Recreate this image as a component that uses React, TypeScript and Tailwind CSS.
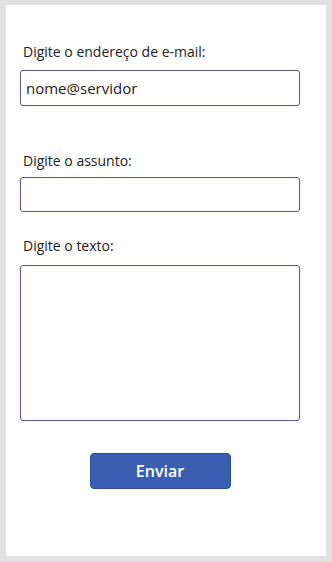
import React, { useState } from 'react';

const font = { fontFamily: '"Open Sans", "Noto Sans", sans-serif' };

export default function App() {
  const [email, setEmail] = useState('nome@servidor');
  const [subject, setSubject] = useState('');
  const [body, setBody] = useState('');

  return (
    <div className="h-[562px] w-full bg-[#e1e1e1] pt-[5px] px-[6px]" style={font}>
      <div className="h-[551px] bg-white pl-[14px] pr-[26px] flex flex-col">
        {/* e-mail */}
        <label className="mt-[37px] pl-[3px] h-[20px] text-[14px] leading-[20px] text-[#222]">
          Digite o endereço de e-mail:
        </label>
        <input
          type="text"
          value={email}
          onChange={(e) => setEmail(e.target.value)}
          className="mt-[8px] h-[36px] w-full rounded-[3px] border-[1.5px] border-[#56568a] px-[5px] text-[15px] text-[#222] focus:outline-none"
        />

        {/* assunto */}
        <label className="mt-[45px] pl-[3px] h-[20px] text-[14px] leading-[20px] text-[#222]">
          Digite o assunto:
        </label>
        <input
          type="text"
          value={subject}
          onChange={(e) => setSubject(e.target.value)}
          className="mt-[6px] h-[35px] w-full rounded-[3px] border-[1.5px] border-[#56568a] px-[5px] text-[15px] text-[#222] focus:outline-none"
        />

        {/* texto */}
        <label className="mt-[24px] pl-[3px] h-[20px] text-[14px] leading-[20px] text-[#222]">
          Digite o texto:
        </label>
        <textarea
          value={body}
          onChange={(e) => setBody(e.target.value)}
          className="mt-[9px] h-[156px] w-full resize-none rounded-[3px] border-[1.5px] border-[#56568a] px-[5px] py-[4px] text-[15px] text-[#222] focus:outline-none"
        />

        <div className="flex justify-center">
          <button
            type="button"
            className="mt-[32px] h-[36px] w-[141px] rounded-[4px] border border-[#2e4f96] bg-[#3a5fb1] text-[16px] font-semibold text-white"
          >
            Enviar
          </button>
        </div>
      </div>
    </div>
  );
}
